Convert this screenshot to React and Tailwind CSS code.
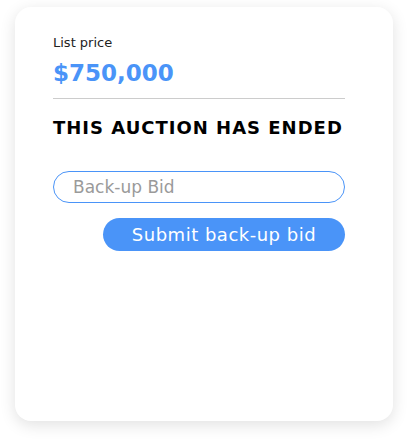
export default function App() {
  return (
    <div className="min-h-screen bg-white pt-[7px] px-[15px] font-['DejaVu_Sans',sans-serif]">
      <div className="h-[414px] rounded-2xl bg-white shadow-[0_4px_16px_rgba(0,0,0,0.12)] pl-[38px] pr-[48px] pt-[27px]">
        <div className="text-[13px] text-[#222] leading-[18px]">List price</div>
        <div className="mt-[5px] text-[23px] font-bold text-[#4a94f8] leading-[32px]">$750,000</div>
        <div className="mt-[9px] h-px bg-[#cccccc]" />
        <div className="mt-[17px] text-[18px] font-bold text-black leading-[24px] tracking-[1px]">
          THIS AUCTION HAS ENDED
        </div>
        <input
          className="mt-[31px] block w-full h-[32px] rounded-full border border-[#4a94f8] px-[19px] text-[17px] placeholder:text-[#9a9a9a] outline-none"
          placeholder="Back-up Bid"
        />
        <div className="mt-[15px] flex justify-end">
          <button className="w-[242px] h-[33px] rounded-full bg-[#4a94f8] text-white text-[18px] tracking-[0.5px]">
            Submit back-up bid
          </button>
        </div>
      </div>
    </div>
  );
}
